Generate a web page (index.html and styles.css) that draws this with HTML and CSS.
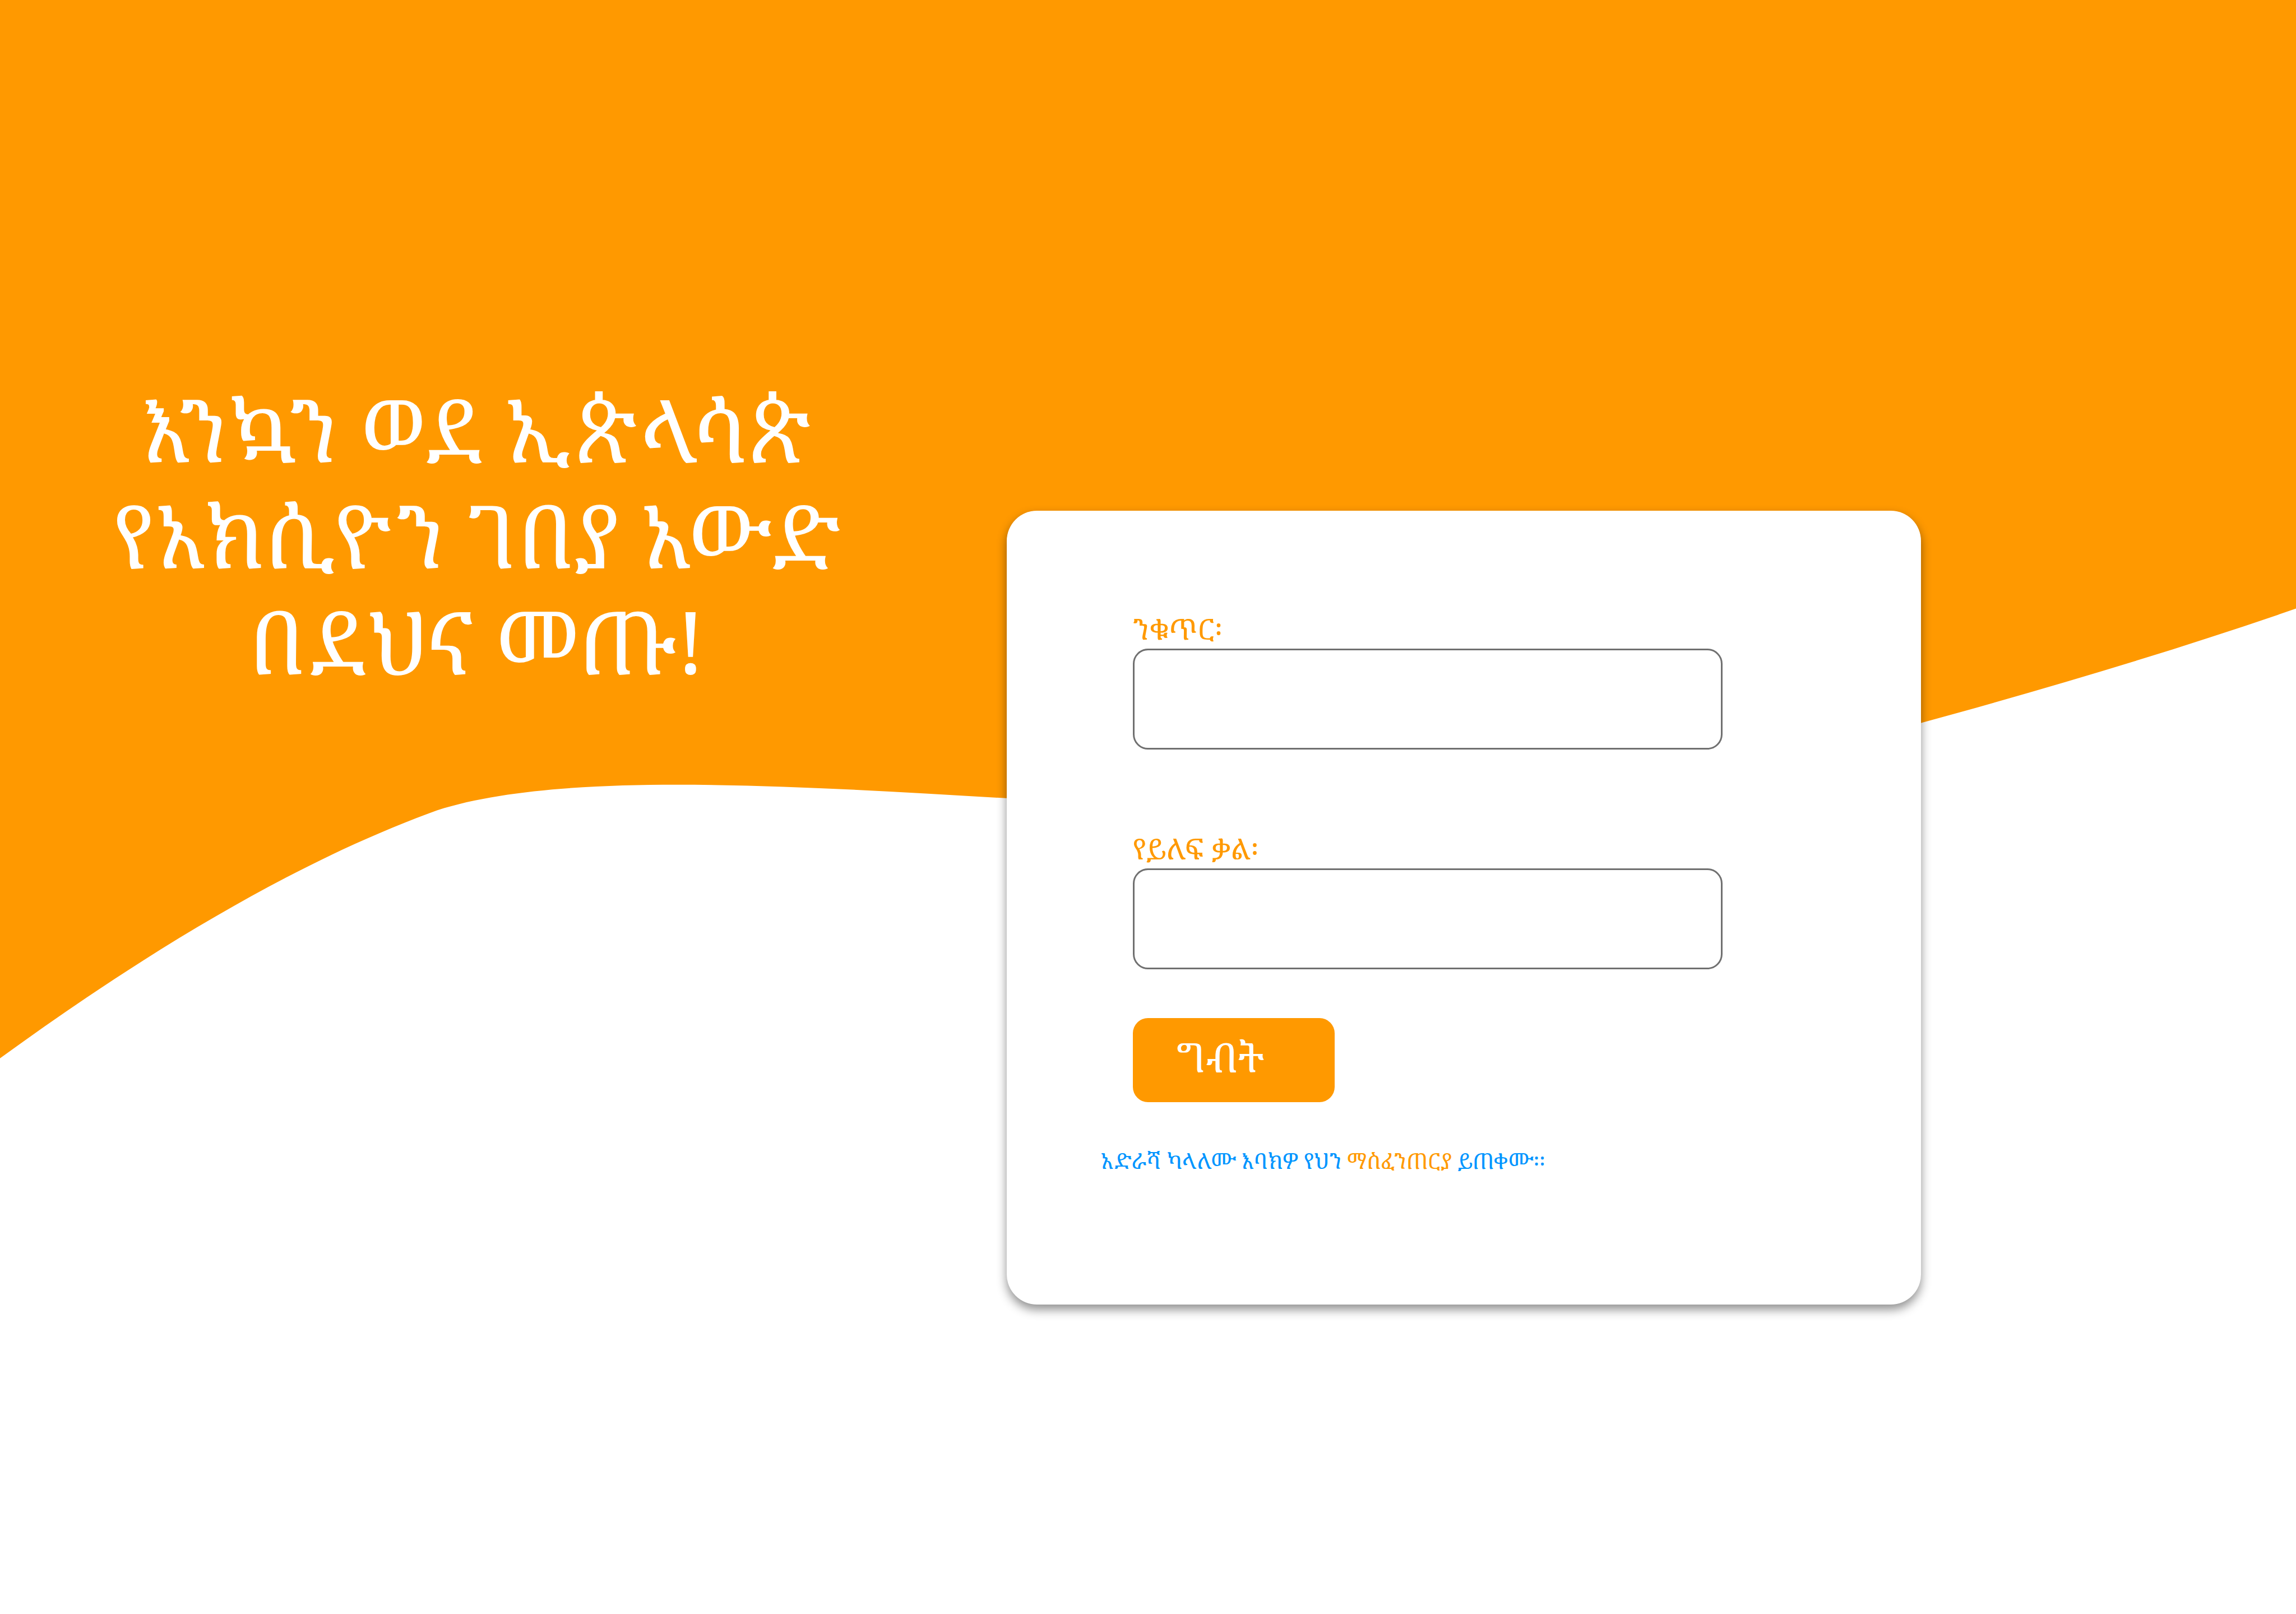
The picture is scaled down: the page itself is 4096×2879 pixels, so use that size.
FILE: index.html
```html
<!DOCTYPE html>
<html lang="am">
<head>
<meta charset="utf-8">
<meta name="viewport" content="width=device-width, initial-scale=1">
<title>ኢጵላሳጵ</title>
<link rel="stylesheet" href="styles.css">
</head>
<body>
<svg class="wave" viewBox="0 0 5464 3840" preserveAspectRatio="none" aria-hidden="true">
<path d="M0 0H5464V1448C5180 1546 4880 1636 4572 1720C3700 1958 3100 1940 2395 1899C2130 1884 1870 1867 1609 1867C1410 1867 1190 1879 1040 1928C738 2037 390 2234 0 2518Z"/>
</svg>
<main class="page">
<h1 class="welcome">እንኳን ወደ ኢጵላሳጵ<br>የአክሲዮን ገበያ አውድ<br>በደህና መጡ!</h1>
<section class="card">
<form class="login">
<div class="field">
<label class="label" for="number">ንቁጥር፡</label>
<input class="input" id="number" type="text">
</div>
<div class="field">
<label class="label" for="password">የይለፍ ቃል፡</label>
<input class="input" id="password" type="password">
</div>
<button class="submit" type="submit">ግብት</button>
</form>
<p class="hint">አድራሻ ካላለሙ እባክዎ የህን <a class="link" href="#">ማስፈንጠርያ</a> ይጠቀሙ፡፡</p>
</section>
</main>
</body>
</html>
```
FILE: styles.css
```css
* { box-sizing: border-box; }

body {
  margin: 0;
  background: #fff;
  font-family: Nyala, "Noto Serif Ethiopic", "Noto Sans Ethiopic", "Abyssinica SIL", FreeSerif, serif;
}

.wave {
  position: absolute;
  inset: 0;
  width: 100%;
  height: 100%;
  fill: #f90;
}

.page {
  position: relative;
  display: grid;
  grid-template-columns: 1796fr 1631fr 669fr;
  align-items: start;
  min-height: 100vh;
}

.welcome {
  margin: 670px 94px 0 0;
  color: #fff;
  font-size: 156px;
  font-weight: 400;
  line-height: 189px;
  text-align: center;
  white-space: nowrap;
}

.card {
  margin-top: 911px;
  padding: 180px 168px 230px;
  border-radius: 54px;
  background: #fff;
  box-shadow: 0 9px 18px rgba(0, 0, 0, 0.44);
}

.login {
  display: flex;
  flex-direction: column;
  align-items: flex-start;
  padding: 0 186px 0 57px;
}

.field {
  display: flex;
  flex-direction: column;
  gap: 6px;
  width: 100%;
  margin-bottom: 146px;
}

.field + .field { margin-bottom: 87px; }

.label {
  color: #f90;
  font-size: 52px;
  line-height: 60px;
}

.input {
  width: 100%;
  height: 180px;
  padding: 0 36px;
  border: 3px solid #707070;
  border-radius: 27px;
  background: #fff;
  font: inherit;
  font-size: 52px;
}

.submit {
  width: 360px;
  height: 150px;
  padding: 0 48px 12px 0;
  border: 0;
  border-radius: 27px;
  background: #f90;
  color: #fff;
  font: inherit;
  font-size: 72px;
}

.hint {
  margin: 77px 0 0;
  color: #0095ff;
  font-size: 39px;
  line-height: 54px;
  white-space: nowrap;
}

.link {
  color: #f90;
  text-decoration: none;
}
```
